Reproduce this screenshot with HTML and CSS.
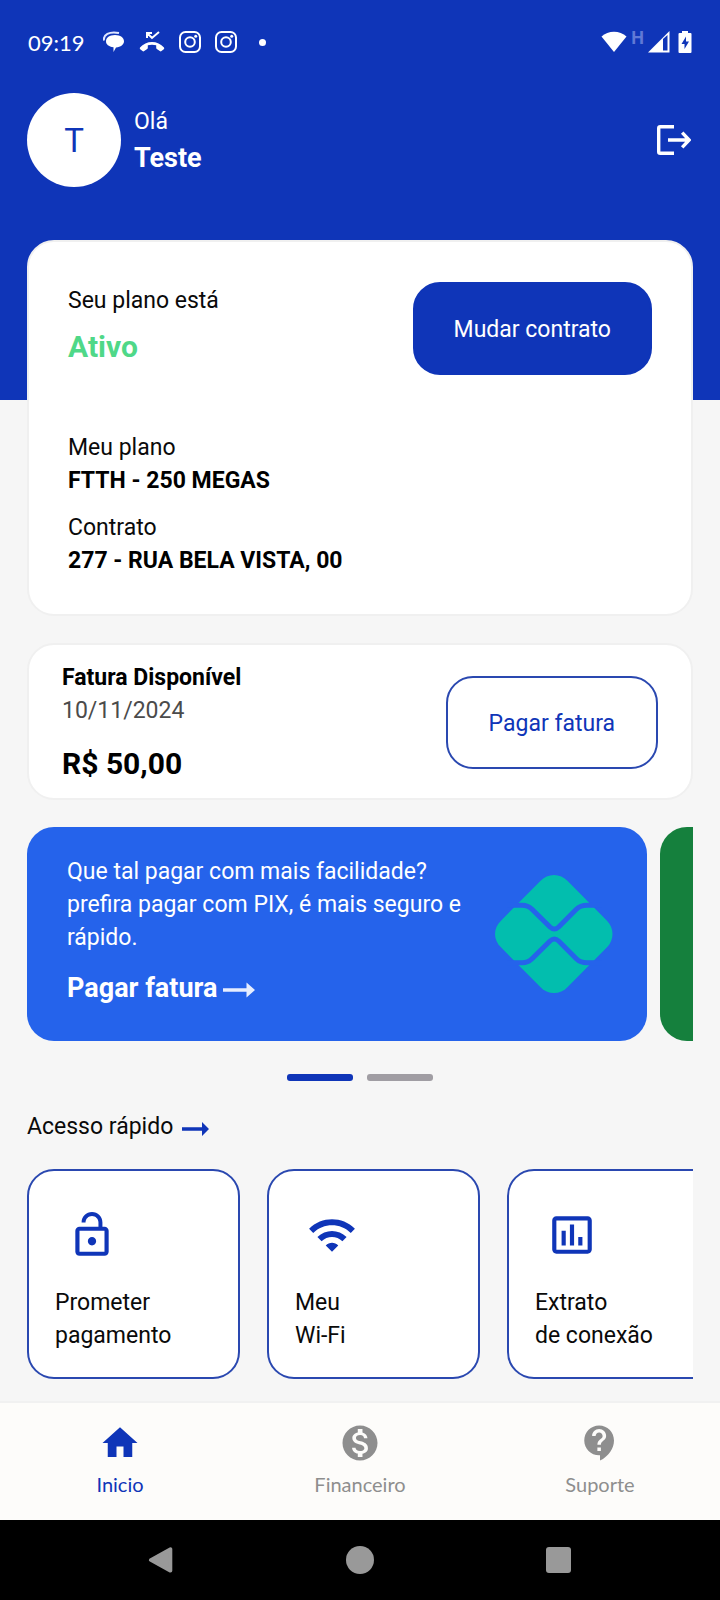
FILE: index.html
```html
<!DOCTYPE html>
<html lang="pt-BR">
<head>
<meta charset="utf-8">
<meta name="viewport" content="width=device-width, initial-scale=1">
<title>Minha conta</title>
<link rel="stylesheet" href="styles.css">
</head>
<body>
<header class="hero">
  <div class="status">
    <span class="status-time">09:19</span>
    <div class="status-apps">
      <svg width="22" height="22" viewBox="0 0 22 22"><path d="M1 9.500C0 4 6 0 16 2" fill="none" stroke="#dfe6ff" stroke-width="2"/><path d="M12 4c5.500 0 9 2.800 9 6.300 0 3.300-3.200 5.900-8 6.200l-2.500 4.500v-4.700C5.500 15.500 3 13.500 3 10.300 3 6.800 6.500 4 12 4z" fill="#fff"/></svg>
      <svg width="26" height="22" viewBox="0 0 26 22"><path d="M7 2h6M8 1v6M8 2l5 5 7-6" fill="none" stroke="#fff" stroke-width="2"/><path d="M1 16.500C7 9 19 9 25 16.500c.4.600.3 1.200-.2 1.700l-2.300 1.900c-.5.500-1.200.4-1.700 0l-3-2.200c-.4-.3-.6-.7-.6-1.200v-2.400c-2.700-.8-5.700-.8-8.400 0v2.400c0 .5-.2.900-.6 1.200l-3 2.200c-.5.400-1.200.5-1.700 0l-2.300-1.900c-.5-.5-.6-1.100-.2-1.700z" fill="#fff"/></svg>
      <svg width="22" height="22" viewBox="0 0 22 22"><g fill="none" stroke="#fff" stroke-width="2"><rect x="1" y="1" width="20" height="20" rx="5.500"/><circle cx="11" cy="11" r="4.800"/></g><circle cx="16.700" cy="5.300" r="1.500" fill="#fff"/></svg>
      <svg width="22" height="22" viewBox="0 0 22 22"><g fill="none" stroke="#fff" stroke-width="2"><rect x="1" y="1" width="20" height="20" rx="5.500"/><circle cx="11" cy="11" r="4.800"/></g><circle cx="16.700" cy="5.300" r="1.500" fill="#fff"/></svg>
      <span class="status-dot"></span>
    </div>
    <div class="status-system">
      <svg width="26" height="22" viewBox="0 0 26 22"><path d="M.5 5.500C7-.8 19-.8 25.500 5.500L13 21z" fill="#fff"/></svg>
      <span class="status-net">H</span>
      <svg width="22" height="22" viewBox="0 0 22 22"><path d="M0 21.500L21.500 0v21.500zM15 8v11.500h4.500V4z" fill="#fff" fill-rule="evenodd"/></svg>
      <svg class="status-battery" width="14" height="22" viewBox="0 0 14 22"><path d="M4 0h6v2h2.500q1 0 1 1v18q0 1-1 1h-11q-1 0-1-1V3q0-1 1-1H4z" fill="#fff"/><path d="M8 5.500L3.500 13H6.500v5L11 10.500H8z" fill="#0f35b8"/></svg>
    </div>
  </div>
  <div class="user">
    <div class="avatar">T</div>
    <div class="greeting">
      <p class="text">Olá</p>
      <p class="user-name">Teste</p>
    </div>
    <button class="logout" type="button" aria-label="Sair">
      <svg width="36" height="34" viewBox="0 0 36 34" fill="none" stroke="#fff" stroke-width="3.400"><path d="M19 3.700H5.200Q3.700 3.700 3.700 5.200v23.600q0 1.500 1.500 1.500H19"/><path d="M13 17H34M27.200 9.600l7 7.400-7 7.400"/></svg>
    </button>
  </div>
</header>

<main class="content">
  <section class="card plan">
    <div class="plan-top">
      <div class="plan-state">
        <p class="text">Seu plano está</p>
        <p class="plan-status">Ativo</p>
      </div>
      <button class="button button-solid" type="button">Mudar contrato</button>
    </div>
    <div class="plan-details">
      <div>
        <p class="text">Meu plano</p>
        <p class="text strong">FTTH - 250 MEGAS</p>
      </div>
      <div>
        <p class="text">Contrato</p>
        <p class="text strong">277 - RUA BELA VISTA, 00</p>
      </div>
    </div>
  </section>

  <section class="card invoice">
    <div>
      <p class="text strong">Fatura Disponível</p>
      <p class="text muted">10/11/2024</p>
      <p class="invoice-total">R$ 50,00</p>
    </div>
    <button class="button button-outline" type="button">Pagar fatura</button>
  </section>

  <section class="banners">
    <article class="banner banner-pix">
      <div class="banner-copy">
        <p class="text">Que tal pagar com mais facilidade? prefira pagar com PIX, é mais seguro e rápido.</p>
        <a class="banner-link" href="#pagar">Pagar fatura
          <svg class="arrow" width="32" height="16" viewBox="0 0 32 16"><path d="M0 6.200h23.500V.5L32 8l-8.500 7.500V9.800H0z" fill="#e6edff"/></svg>
        </a>
      </div>
      <svg class="pix" width="118" height="118" viewBox="104 105 354 354">
        <path d="M240 123C262 99 300 99 322 123L440 242C462 264 462 300 440 322L322 441C300 465 262 465 240 441L122 322C98 300 98 264 122 242z" fill="#02beae"/>
        <g fill="none" stroke="#2563eb" stroke-width="15"><path d="M140 196H185Q203 196 215 208L269 261Q282 273 295 261L348 208Q360 196 380 196H425"/><path d="M140 368H185Q203 368 215 356L269 303Q282 291 295 303L348 356Q360 368 380 368H425"/></g>
      </svg>
    </article>
    <article class="banner banner-next"></article>
  </section>
  <div class="pager">
    <span class="pager-bar pager-active"></span>
    <span class="pager-bar"></span>
  </div>

  <h2 class="quick-title">Acesso rápido
    <svg class="arrow" width="28" height="14" viewBox="0 0 28 14"><path d="M0 5.300h20V0l7 7-7 7V8.700H0z" fill="#0f35b8"/></svg>
  </h2>
  <nav class="tiles" aria-label="Acesso rápido">
    <a class="tile" href="#prometer">
      <svg class="tile-icon" viewBox="0 0 24 24"><path d="M12 17c1.100 0 2-.9 2-2s-.9-2-2-2-2 .9-2 2 .9 2 2 2zm6-9h-1V6c0-2.760-2.240-5-5-5S7 3.240 7 6h1.900c0-1.710 1.390-3.100 3.100-3.100s3.100 1.390 3.100 3.100v2H6c-1.100 0-2 .9-2 2v10c0 1.100.9 2 2 2h12c1.100 0 2-.9 2-2V10c0-1.100-.9-2-2-2zm0 12H6V10h12v10z"/></svg>
      <span>Prometer<br>pagamento</span>
    </a>
    <a class="tile" href="#wifi">
      <svg class="tile-icon" viewBox="0 0 24 24"><path d="M1 9l2 2c4.970-4.970 13.030-4.970 18 0l2-2C16.930 2.930 7.080 2.930 1 9zm8 8l3 3 3-3c-1.650-1.660-4.340-1.660-6 0zm-4-4l2 2c2.760-2.760 7.240-2.760 10 0l2-2C15.140 9.140 8.870 9.140 5 13z"/></svg>
      <span>Meu<br>Wi-Fi</span>
    </a>
    <a class="tile" href="#extrato">
      <svg class="tile-icon" viewBox="0 0 24 24"><path d="M9 17H7v-7h2v7zm4 0h-2V7h2v10zm4 0h-2v-4h2v4zm2.500 2.100h-15V5h15v14.100zm0-16.100h-15c-1.100 0-2 .9-2 2v14c0 1.100.9 2 2 2h15c1.100 0 2-.9 2-2V5c0-1.100-.9-2-2-2z"/></svg>
      <span>Extrato<br>de conexão</span>
    </a>
  </nav>
</main>

<nav class="tabs" aria-label="Principal">
  <a class="tab tab-active" href="#inicio">
    <svg class="tab-icon" viewBox="0 0 24 24"><path d="M10 20v-6h4v6h5v-8h3L12 3 2 12h3v8z"/></svg>
    Inicio
  </a>
  <a class="tab" href="#financeiro">
    <svg class="tab-icon" viewBox="0 0 24 24"><path d="M12 2C6.480 2 2 6.480 2 12s4.480 10 10 10 10-4.480 10-10S17.520 2 12 2zm1.410 16.090V20h-2.670v-1.930c-1.710-.36-3.160-1.460-3.270-3.400h1.960c.1 1.050.82 1.870 2.650 1.870 1.960 0 2.400-.98 2.400-1.590 0-.83-.44-1.610-2.670-2.140-2.480-.6-4.180-1.620-4.180-3.670 0-1.720 1.390-2.840 3.110-3.210V4h2.670v1.950c1.860.45 2.790 1.860 2.850 3.390H14.300c-.05-1.110-.64-1.870-2.220-1.870-1.500 0-2.400.68-2.400 1.640 0 .84.65 1.390 2.670 1.910s4.180 1.390 4.180 3.910c-.01 1.830-1.380 2.830-3.120 3.160z"/></svg>
    Financeiro
  </a>
  <a class="tab" href="#suporte">
    <svg class="tab-icon" viewBox="0 0 24 24"><path d="M11.500 2C6.810 2 3 5.810 3 10.500S6.810 19 11.500 19h.5v3c4.860-2.340 8-7 8-11.500C20 5.810 16.190 2 11.500 2zm1 14.500h-2v-2h2v2zm0-3.500h-2c0-3.250 3-3 3-5 0-1.100-.9-2-2-2s-2 .9-2 2h-2c0-2.210 1.790-4 4-4s4 1.790 4 4c0 2.500-3 2.750-3 5z"/></svg>
    Suporte
  </a>
</nav>

<footer class="system-bar">
  <button class="system-button" type="button" aria-label="Voltar"><svg width="32" height="32" viewBox="0 0 32 32"><path d="M5 16L27 4v24z" stroke="#999" stroke-width="4" stroke-linejoin="round" transform="translate(1.200 1.600) scale(.9)"/></svg></button>
  <button class="system-button" type="button" aria-label="Tela inicial"><svg width="32" height="32" viewBox="0 0 32 32"><circle cx="16" cy="16" r="14"/></svg></button>
  <button class="system-button" type="button" aria-label="Recentes"><svg width="32" height="32" viewBox="0 0 32 32"><rect x="3" y="3" width="25" height="26" rx="3"/></svg></button>
</footer>
</body>
</html>
```
FILE: styles.css
```css
:root {
  --blue: #0f35b8;
  --outline: #2a48b0;
  --radius: 27px;
  --gutter: 27px;
}

* {
  box-sizing: border-box;
}

body {
  display: flex;
  flex-direction: column;
  min-height: 100vh;
  margin: 0;
  background: #f6f6f6;
  color: #0a0a0a;
  font-family: Roboto, "Liberation Sans", sans-serif;
  font-size: 23px;
  line-height: 33px;
}

p,
h2 {
  margin: 0;
}

a {
  color: inherit;
  text-decoration: none;
}

button {
  font: inherit;
  cursor: pointer;
}

svg {
  display: block;
  flex: none;
}

.strong {
  font-weight: 700;
  color: #000;
}

.muted {
  color: #4b4b4b;
}

.arrow {
  margin-top: 4px;
}

/* Header */
.hero {
  padding-bottom: 213px;
  background: var(--blue);
  color: #fff;
}

.status {
  display: flex;
  align-items: center;
  height: 84px;
  padding: 0 28px;
}

.status-time {
  font-family: Lato, sans-serif;
  font-size: 22px;
}

.status-apps {
  display: flex;
  align-items: center;
  gap: 14px;
  margin-left: 18px;
}

.status-dot {
  width: 7px;
  height: 7px;
  margin-left: 8px;
  border-radius: 50%;
  background: #fff;
}

.status-system {
  display: flex;
  align-items: center;
  gap: 4px;
  margin-left: auto;
}

.status-net {
  align-self: flex-start;
  color: #6079d6;
  font-size: 18px;
  font-weight: 700;
  line-height: 14px;
}

.status-battery {
  margin-left: 4px;
}

.user {
  display: flex;
  align-items: center;
  gap: 13px;
  padding: 9px var(--gutter) 0;
}

.avatar {
  display: flex;
  align-items: center;
  justify-content: center;
  width: 94px;
  height: 94px;
  border-radius: 50%;
  background: #fff;
  color: var(--blue);
  font-size: 33px;
}

.greeting {
  padding-top: 2px;
}

.user-name {
  font-size: 27px;
  font-weight: 700;
  line-height: 40px;
}

.logout {
  margin-left: auto;
  padding: 0 2px 0 0;
  border: 0;
  background: none;
}

/* Content */
.content {
  flex: 1;
  margin-top: -160px;
  padding: 0 var(--gutter) 22px;
}

.card {
  border: 2px solid #f0f0f0;
  border-radius: var(--radius);
  background: #fff;
}

.button {
  padding: 29px 39px 27px;
  border: 2px solid var(--blue);
  border-radius: var(--radius);
}

.button-solid {
  background: var(--blue);
  color: #fff;
}

.button-outline {
  padding: 29px 41px 27px;
  border-color: var(--outline);
  background: #fff;
  color: var(--blue);
}

.plan {
  padding: 40px 39px 37px;
}

.plan-top {
  display: flex;
  align-items: flex-start;
  justify-content: space-between;
}

.plan-state {
  padding-top: 2px;
}

.plan-status {
  margin-top: 10px;
  color: #4fd888;
  font-size: 30px;
  font-weight: 700;
  line-height: 40px;
}

.plan-details {
  display: grid;
  gap: 14px;
  margin-top: 56px;
}

.invoice {
  display: flex;
  align-items: center;
  justify-content: space-between;
  margin-top: 27px;
  padding: 16px 33px 14px;
}

.invoice-total {
  margin-top: 17px;
  color: #000;
  font-size: 30px;
  font-weight: 700;
  line-height: 40px;
}

.banners {
  display: flex;
  gap: 13px;
  margin-top: 27px;
  overflow-x: auto;
  scrollbar-width: none;
}

.banner {
  flex: 0 0 calc(100% - 46px);
  border-radius: var(--radius);
}

.banner-pix {
  display: flex;
  align-items: center;
  gap: 12px;
  padding: 28px 34px 28px 40px;
  background: #2563eb;
  color: #fff;
}

.banner-copy {
  flex: 1;
  padding-bottom: 5px;
}

.banner-link {
  display: flex;
  align-items: center;
  gap: 6px;
  margin-top: 14px;
  font-size: 27px;
  font-weight: 700;
  line-height: 40px;
}

.banner-next {
  background: #15803d;
}

.pager {
  display: flex;
  justify-content: center;
  gap: 14px;
  margin-top: 33px;
}

.pager-bar {
  width: 66px;
  height: 7px;
  border-radius: 3px;
  background: #a09da3;
}

.pager-active {
  background: var(--blue);
}

.quick-title {
  display: flex;
  align-items: center;
  gap: 9px;
  margin-top: 29px;
  font-size: 23px;
  font-weight: 400;
}

.tiles {
  display: flex;
  gap: 27px;
  margin-top: 26px;
  overflow-x: auto;
  scrollbar-width: none;
}

.tile {
  flex: 0 0 213px;
  padding: 26px 26px 25px;
  border: 2px solid var(--outline);
  border-radius: var(--radius);
  background: #fff;
}

.tile-icon {
  width: 50px;
  height: 50px;
  margin: 13px 12px 26px;
  fill: var(--blue);
}

/* Tabs */
.tabs {
  display: grid;
  grid-template-columns: repeat(3, 1fr);
  padding: 19px 0;
  border-top: 2px solid #f1f1f1;
  background: #fdfcfa;
}

.tab {
  display: flex;
  flex-direction: column;
  align-items: center;
  gap: 4px;
  color: #8e8e8e;
  font-family: Lato, sans-serif;
  font-size: 20px;
}

.tab-icon {
  width: 42px;
  height: 42px;
  fill: currentColor;
}

.tab-active {
  color: var(--blue);
}

.system-bar {
  display: flex;
  align-items: center;
  justify-content: space-between;
  height: 80px;
  padding: 0 145px;
  background: #000;
}

.system-button {
  padding: 0;
  border: 0;
  background: none;
  fill: #999;
}
```
